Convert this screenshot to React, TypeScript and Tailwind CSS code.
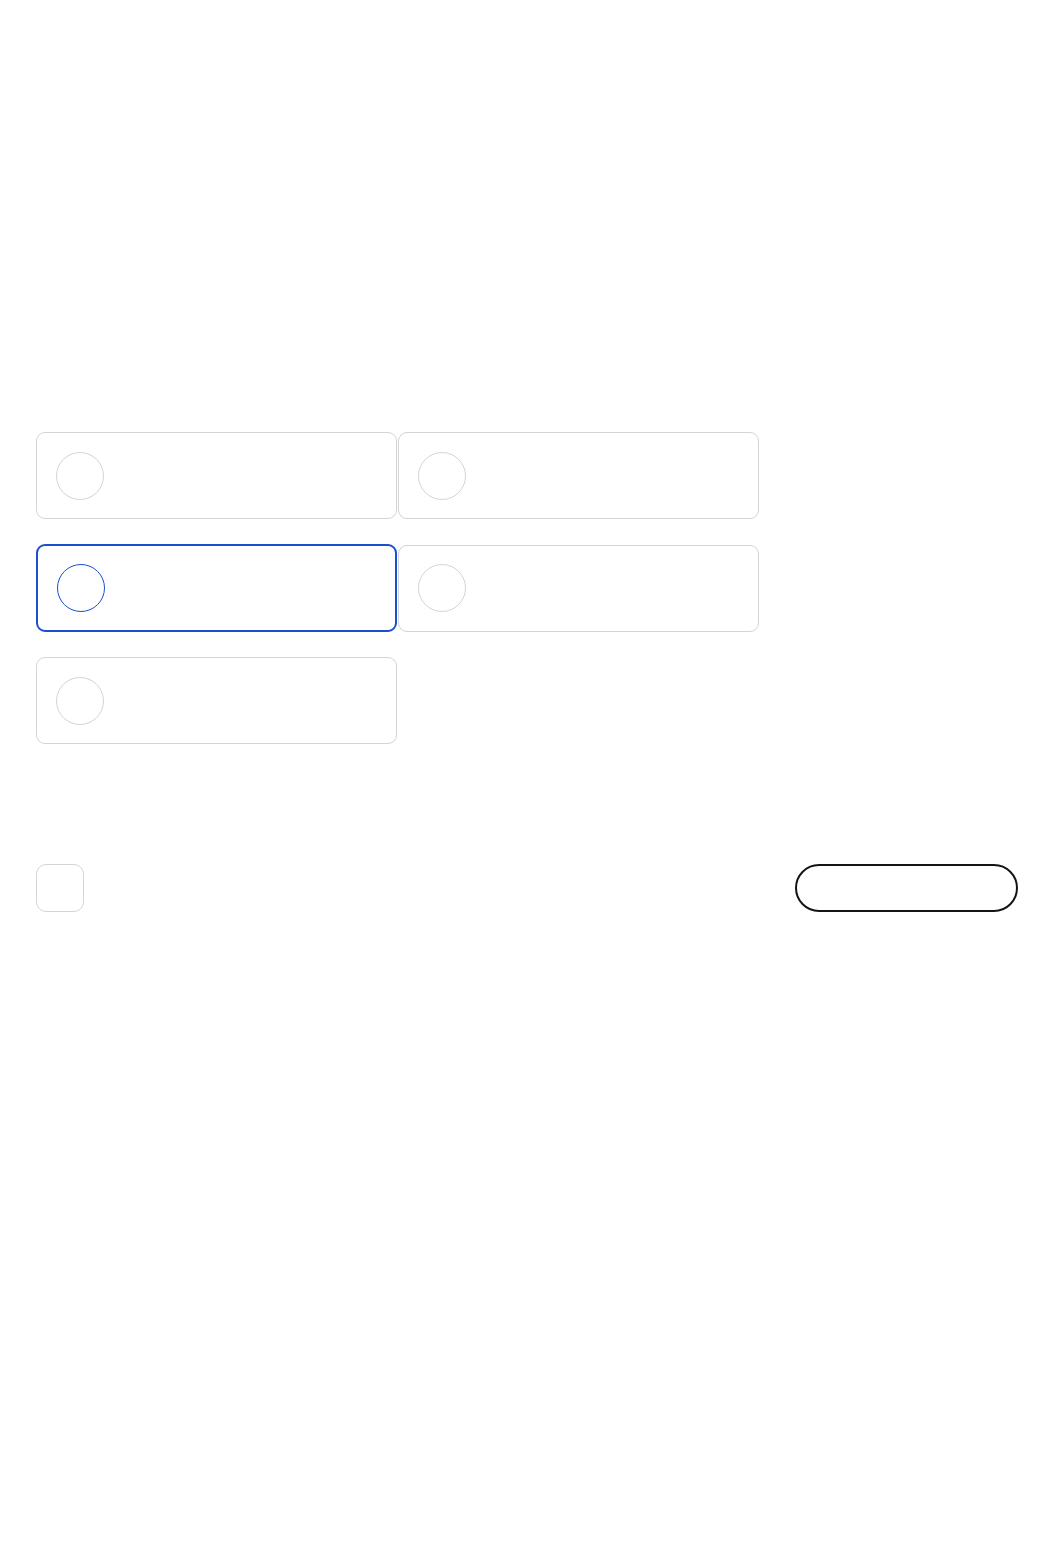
import React from "react";

type Option = { id: number; selected?: boolean };

const options: Option[] = [
  { id: 1 },
  { id: 2 },
  { id: 3, selected: true },
  { id: 4 },
  { id: 5 },
];

function OptionCard({ selected }: { selected?: boolean }) {
  if (selected) {
    return (
      <div className="h-[88px] w-[361px] rounded-[9px] border-2 border-[#1a4fd0] bg-white flex items-center pl-[19px]">
        <div className="h-12 w-12 rounded-full border border-[#1a4fd0]" />
      </div>
    );
  }
  return (
    <div className="h-[87px] w-[361px] self-center rounded-[9px] border border-[#d4d4d4] bg-white flex items-center pl-[19px]">
      <div className="h-12 w-12 rounded-full border border-[#d4d4d4]" />
    </div>
  );
}

export default function App() {
  return (
    <div
      className="min-h-[1559px] w-full bg-white px-9 pt-[432px]"
      style={{ fontFamily: "Inter, 'Liberation Sans', sans-serif" }}
    >
      <div className="grid grid-cols-[361px_361px] gap-x-px gap-y-[25px]">
        {options.map((o) => (
          <OptionCard key={o.id} selected={o.selected} />
        ))}
      </div>
      <div className="mt-[120px] flex items-center justify-between">
        <button
          type="button"
          aria-label="checkbox"
          className="h-12 w-12 rounded-[10px] border border-[#d4d4d4] bg-white"
        />
        <button
          type="button"
          aria-label="continue"
          className="h-12 w-[223px] mr-px rounded-full border-2 border-[#141414] bg-white"
        />
      </div>
    </div>
  );
}
